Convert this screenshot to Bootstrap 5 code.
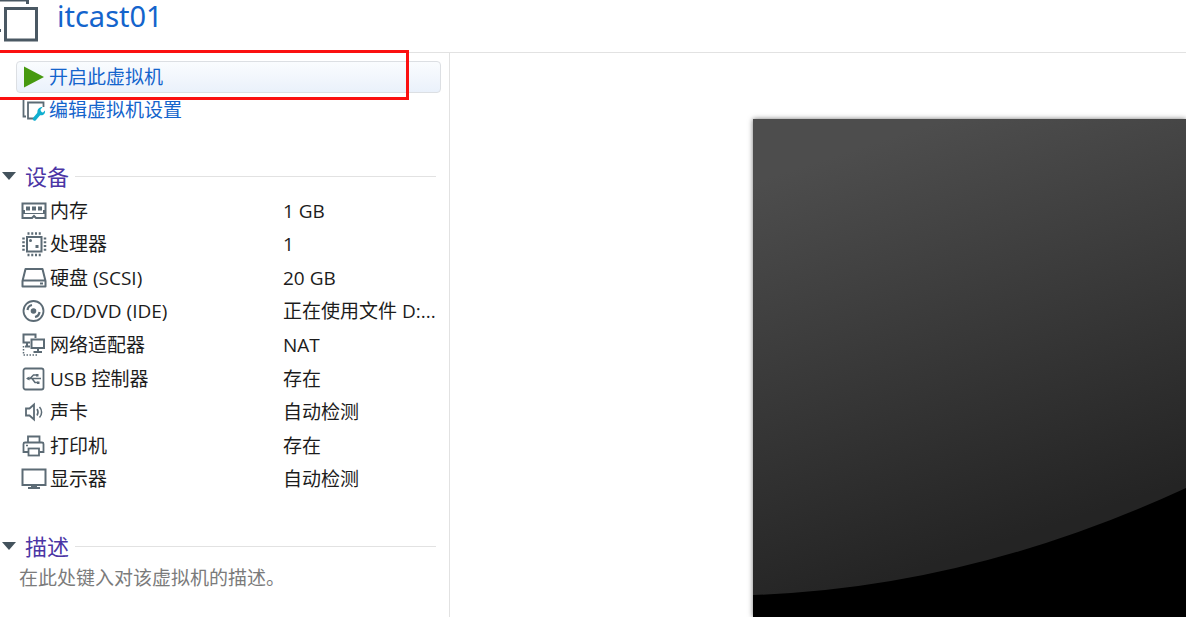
<!DOCTYPE html>
<html lang="zh-CN">
<head>
<meta charset="utf-8">
<meta name="viewport" content="width=device-width, initial-scale=1">
<title>itcast01</title>
<link href="https://cdn.jsdelivr.net/npm/bootstrap@5.3.0/dist/css/bootstrap.min.css" rel="stylesheet">
<style>
  body { font-family: "Open Sans", "Noto Sans CJK SC", sans-serif; font-size: 19px; line-height: 24px; color: #1c1c1c; background: #fff; }
  .vm-header { height: 53px; border-bottom: 1px solid #e2e2e2; }
  .vm-title { margin-left: 17px; font-family: "Noto Sans", "Noto Sans CJK SC", sans-serif; font-size: 29px; line-height: 32px; font-weight: 400; color: #1464cc; }
  .vm-side { flex: 0 0 450px; border-right: 1px solid #e2e2e2; }
  .vm-actions { padding: 8px 8px 0 16px; gap: 1px; }
  .vm-action { height: 32px; padding: 0 0 0 5px; gap: 2px; font-size: 19px; line-height: 24px; color: #1464cc; border: 1px solid transparent; border-radius: 4px; }
  .vm-action-hot, .vm-action-hot:hover { color: #1464cc; border-color: #dcdfe3; background: linear-gradient(#fafcfe, #eaf1fb); }
  .vm-mark { top: -3px; left: -3px; width: 412px; height: 50px; border: 3px solid #fb1010; pointer-events: none; }
  .vm-section { margin: 35px 13px 0 2px; }
  .vm-toggle { gap: 6px; font-size: 22px; line-height: 30px; color: #4b35a5; }
  .vm-toggle svg { margin-right: 3px; }
  .vm-rule { height: 1px; background: #e2e2e2; }
  .vm-devices { height: 302px; margin-top: 3px; table-layout: fixed; }
  .vm-devices th, .vm-devices td { padding: 0; font-weight: 400; vertical-align: middle; }
  .vm-devices th { width: 283px; padding-left: 21px; }
  .vm-name { gap: 3px; }
  .vm-icon { width: 26px; height: 26px; flex: none; fill: none; stroke: #5c6b75; stroke-width: 2; }
  .vm-icon .solid { fill: #5c6b75; stroke: none; }
  .vm-note { padding: 0 0 0 19px; border: 0; resize: none; outline: 0; height: 34px; line-height: 34px; overflow: hidden; }
  .vm-note::placeholder { color: #7b7b7b; opacity: 1; }
  .vm-stage { padding: 66px 0 0 303px; }
  .vm-screen { background: #000; box-shadow: 0 0 5px rgba(0, 0, 0, .55); }
</style>
</head>
<body>
<div class="d-flex flex-column min-vh-100">
  <header class="vm-header d-flex align-items-start">
    <svg width="40" height="44" viewBox="0 0 40 44" fill="none" stroke="#4a5863" stroke-width="3" aria-hidden="true">
      <path d="M0 0H27.500V4"/><rect x="5.500" y="8.500" width="31" height="31.500"/><path d="M0 29V32" stroke-width="2"/>
    </svg>
    <h1 class="vm-title mb-0">itcast01</h1>
  </header>

  <div class="d-flex flex-grow-1">
    <aside class="vm-side">
      <div class="vm-actions position-relative d-flex flex-column">
        <button type="button" class="vm-action vm-action-hot btn d-flex align-items-center text-start">
          <svg width="25" height="24" viewBox="0 0 25 24" aria-hidden="true"><path d="M2 1.500L22 12L2 22.500Z" fill="#46990f"/></svg>
          <span>开启此虚拟机</span>
        </button>
        <button type="button" class="vm-action btn d-flex align-items-center text-start">
          <svg width="25" height="24" viewBox="0 0 25 24" fill="none" aria-hidden="true">
            <path d="M3 1H1.500V18.500H4M12 20.500H6V4.500H21.500V9" stroke="#5c6b75" stroke-width="1.800"/>
            <path d="M12.500 21L18 14.500" stroke="#10afd0" stroke-width="3.500" stroke-linecap="round"/>
            <path d="M20.500 9L18.500 11.500L19 14L21 14.500L23 12.500C23.500 16 21 18 17.500 17L15.500 15C15 11.500 17 9 20.500 9Z" fill="#10afd0"/>
          </svg>
          <span>编辑虚拟机设置</span>
        </button>
        <div class="vm-mark position-absolute"></div>
      </div>

      <section class="vm-section">
        <h2 class="mb-0 fs-6 lh-1">
          <button type="button" class="vm-toggle btn border-0 p-0 w-100 d-flex align-items-center" aria-expanded="true">
            <svg width="14" height="8" viewBox="0 0 14 8" aria-hidden="true"><path d="M0 0H14L7 8Z" fill="#43525c"/></svg>
            <span>设备</span><span class="vm-rule flex-grow-1"></span>
          </button>
        </h2>
      </section>
      <table class="vm-devices w-100">
        <tbody>
          <tr><th scope="row"><div class="vm-name d-flex align-items-center">
            <svg class="vm-icon" viewBox="0 0 26 26"><path d="M1.500 5.500H24.500V13H23V15H24.500V20H15L13 18L11 20H1.500V15H3V13H1.500Z"/><path d="M5 10.500H9M11 10.500H15M17 10.500H21" stroke-width="4"/><path d="M3 15.500H23" stroke-width="1"/></svg>
            <span>内存</span></div></th><td>1 GB</td></tr>
          <tr><th scope="row"><div class="vm-name d-flex align-items-center">
            <svg class="vm-icon" viewBox="0 0 26 26"><rect x="6" y="6" width="14.500" height="14.500"/><path d="M6.500 2.500H20M6.500 24H20M2.500 6.500V20M24 6.500V20" stroke-width="2.500" stroke-dasharray="2 1.750"/><circle class="solid" cx="9.500" cy="9.500" r="1.500"/><rect class="solid" x="14.500" y="14" width="3" height="3"/></svg>
            <span>处理器</span></div></th><td>1</td></tr>
          <tr><th scope="row"><div class="vm-name d-flex align-items-center">
            <svg class="vm-icon" viewBox="0 0 26 26"><path d="M4.500 4H21.500L24.500 16V21.500H1.500V16Z" stroke-linejoin="round"/><path d="M1.500 15.500H24.500"/><path d="M19 18.500H22"/></svg>
            <span>硬盘 (SCSI)</span></div></th><td>20 GB</td></tr>
          <tr><th scope="row"><div class="vm-name d-flex align-items-center">
            <svg class="vm-icon" viewBox="0 0 26 26"><circle cx="12.500" cy="13" r="10" stroke-width="1.800"/><circle class="solid" cx="12.500" cy="13" r="2.800"/><path d="M6.500 12C6.800 9.500 8.500 7.500 11 7M18.500 14C18.200 16.500 16.500 18.500 14 19" stroke-width="2.200"/></svg>
            <span>CD/DVD (IDE)</span></div></th><td>正在使用文件 D:...</td></tr>
          <tr><th scope="row"><div class="vm-name d-flex align-items-center">
            <svg class="vm-icon" viewBox="0 0 26 26"><path d="M9 10.500H2.500V2.500H14.500V6M6 11V14M4 14.500H9"/><rect x="10.500" y="7.500" width="12.500" height="8.500"/><path d="M17 16V20M12.500 20H21"/><path d="M2.500 14V23H17" stroke-width="1.500" stroke-dasharray="1.500 1.500"/></svg>
            <span>网络适配器</span></div></th><td>NAT</td></tr>
          <tr><th scope="row"><div class="vm-name d-flex align-items-center">
            <svg class="vm-icon" viewBox="0 0 26 26"><rect x="2.500" y="2.500" width="20" height="21" rx="2" stroke-width="1.800"/><path d="M6 12.500H20M9 12.500L12.500 9H16M11 12.500L14 16.500H17" stroke-width="1.500"/><path class="solid" d="M5 12.500L8.500 10.500V14.500ZM15 8H17.500V10.500H15ZM16 15.500H18.500V18H16Z"/></svg>
            <span>USB 控制器</span></div></th><td>存在</td></tr>
          <tr><th scope="row"><div class="vm-name d-flex align-items-center">
            <svg class="vm-icon" viewBox="0 0 26 26"><path d="M5 9.500H8.500L13 5.500V20.500L8.500 16.500H5Z" stroke-width="1.800"/><path d="M16 10C17.300 12 17.300 14.500 16 16.500M18.500 8C21.300 11 21.300 15.500 18.500 18.500" stroke-width="1.500"/></svg>
            <span>声卡</span></div></th><td>自动检测</td></tr>
          <tr><th scope="row"><div class="vm-name d-flex align-items-center">
            <svg class="vm-icon" viewBox="0 0 26 26"><path d="M7 9V3.500H18.500V9M7 19H2.500V11Q2.500 9.500 4 9.500H21Q22.500 9.500 22.500 11V19H18.500" stroke-width="1.800"/><rect x="7.500" y="15.500" width="10.500" height="7" stroke-width="1.800"/><path d="M5 12.500H7" stroke-width="1.500"/></svg>
            <span>打印机</span></div></th><td>存在</td></tr>
          <tr><th scope="row"><div class="vm-name d-flex align-items-center">
            <svg class="vm-icon" viewBox="0 0 26 26"><rect x="1.500" y="3.500" width="23" height="15.500"/><path d="M7 22H19M10 20H16" stroke-width="2"/></svg>
            <span>显示器</span></div></th><td>自动检测</td></tr>
        </tbody>
      </table>

      <section class="vm-section">
        <h2 class="mb-0 fs-6 lh-1">
          <button type="button" class="vm-toggle btn border-0 p-0 w-100 d-flex align-items-center" aria-expanded="true">
            <svg width="14" height="8" viewBox="0 0 14 8" aria-hidden="true"><path d="M0 0H14L7 8Z" fill="#43525c"/></svg>
            <span>描述</span><span class="vm-rule flex-grow-1"></span>
          </button>
        </h2>
      </section>
      <textarea class="vm-note d-block w-100" rows="1" aria-label="描述" placeholder="在此处键入对该虚拟机的描述。"></textarea>
    </aside>

    <main class="vm-stage flex-grow-1 d-flex">
      <div class="vm-screen flex-grow-1 position-relative">
        <svg class="position-absolute top-0 start-0 w-100 h-100" viewBox="0 0 433 498" preserveAspectRatio="none" aria-hidden="true">
          <defs><linearGradient id="glass" gradientUnits="userSpaceOnUse" x1="19" y1="57" x2="149" y2="456"><stop offset="0" stop-color="#4d4d4d"/><stop offset="1" stop-color="#242424"/></linearGradient></defs>
          <path d="M0 0H433V369Q216.500 469 0 476Z" fill="url(#glass)"/>
        </svg>
      </div>
    </main>
  </div>
</div>
<script src="https://cdn.jsdelivr.net/npm/bootstrap@5.3.0/dist/js/bootstrap.bundle.min.js"></script>
</body>
</html>
